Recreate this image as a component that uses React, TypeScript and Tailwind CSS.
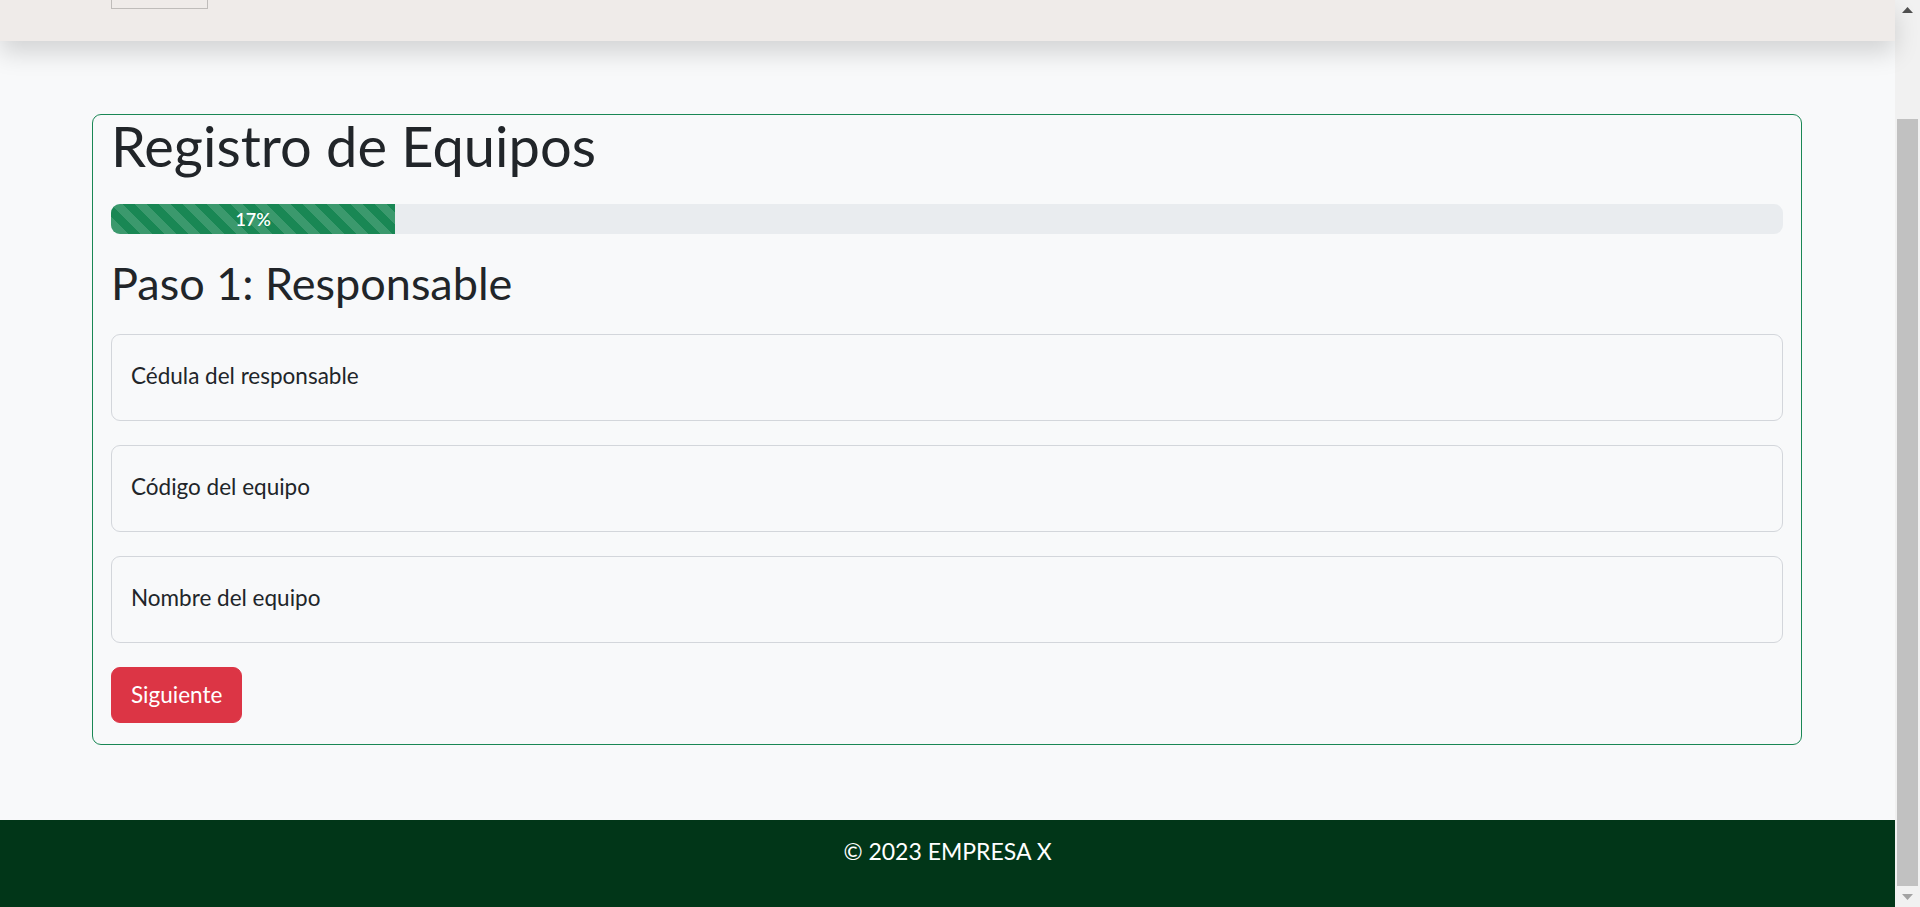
import React from "react";

function Field({ label }: { label: string }) {
  return (
    <div className="mb-[24px] flex h-[87px] items-start rounded-[9px] border border-[#d3d6db] bg-[#f8f9fa] px-[19px] pt-[23px]">
      <span className="text-[22.5px] leading-[36px] text-[#212529]">{label}</span>
    </div>
  );
}

export default function App() {
  return (
    <div className="flex h-[907px] w-full overflow-hidden bg-[#f8f9fa] font-['Lato',sans-serif]">
      <div className="flex w-[1895px] shrink-0 flex-col">
        <header className="relative z-10 h-[41px] shrink-0 bg-[#efebe9] shadow-[0_12px_24px_rgba(0,0,0,0.15)]">
          <div className="ml-[111px] h-[9px] w-[97px] border-x border-b border-[#bfbcba]" />
        </header>

        <main className="flex-1 pt-[73px]">
          <div className="ml-[92px] w-[1710px] rounded-[9px] border border-[#198754] px-[18px] pb-[21px]">
            <h1 className="mb-[27px] text-[56px] leading-[62px] font-normal text-[#212529]">
              Registro de Equipos
            </h1>

            <div className="mb-[22px] flex h-[30px] overflow-hidden rounded-[9px] bg-[#e9ecef]">
              <div
                className="flex h-full items-center justify-center bg-[#198754] bg-[linear-gradient(45deg,rgba(255,255,255,.15)_25%,transparent_25%,transparent_50%,rgba(255,255,255,.15)_50%,rgba(255,255,255,.15)_75%,transparent_75%,transparent)] bg-[length:24px_24px] text-[18px] leading-none font-semibold text-white"
                style={{ width: "17%" }}
              >
                17%
              </div>
            </div>

            <h2 className="mb-[24px] text-[45px] leading-[54px] font-normal text-[#212529]">
              Paso 1: Responsable
            </h2>

            <Field label="Cédula del responsable" />
            <Field label="Código del equipo" />
            <Field label="Nombre del equipo" />

            <button className="h-[56px] rounded-[9px] border border-[#dc3545] bg-[#dc3545] px-[19px] text-[22.5px] leading-[36px] text-white">
              Siguiente
            </button>
          </div>
        </main>

        <footer className="h-[87px] shrink-0 bg-[#013618] pt-[13px] text-center text-[23px] leading-[36px] text-white">
          © 2023 EMPRESA X
        </footer>
      </div>

      <div className="flex w-[25px] shrink-0 flex-col items-center bg-[#f1f1f1]">
        <svg className="mt-[7px]" width="11" height="6" viewBox="0 0 11 6">
          <polygon points="5.5,0 11,6 0,6" fill="#505050" />
        </svg>
        <div className="mt-[106px] h-[767px] w-[21px] bg-[#c1c1c1]" />
        <svg className="mt-[8px]" width="11" height="6" viewBox="0 0 11 6">
          <polygon points="0,0 11,0 5.5,6" fill="#a3a3a3" />
        </svg>
      </div>
    </div>
  );
}
